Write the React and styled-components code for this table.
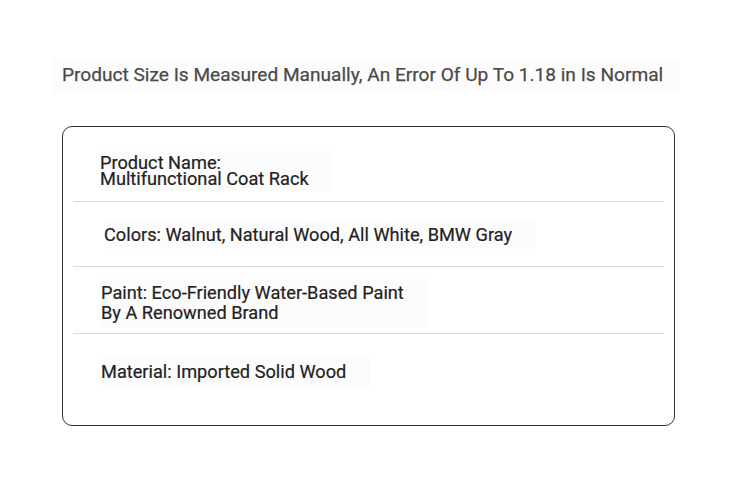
import React from 'react';
import styled, { createGlobalStyle } from 'styled-components';

const Global = createGlobalStyle`
    body {
        margin: 0;
        background: #ffffff;
        font-family: Roboto, "Liberation Sans", sans-serif;
    }
`;

const Page = styled.div`
    width: 750px;
    height: 482px;
    box-sizing: border-box;
    padding-top: 58px;
`;

const Title = styled.div`
    margin: 0 70px 0 52px;
    padding: 5px 10px 6px;
    background-color: #fcfcfc;
    color: #4a4a4a;
    font-size: 19.1px;
    font-weight: 400;
    -webkit-text-stroke: 0.25px #4a4a4a;
    line-height: 24px;
    height: 25px;
`;

const Card = styled.div`
    margin: 32px 75px 0 62px;
    border: 1.3px solid #333333;
    border-radius: 10px;
    padding: 10px 10px 9px;
    height: 300px;
    box-sizing: border-box;
    display: flex;
    flex-direction: column;
`;

const Row = styled.div`
    height: ${p => p.h}px;
    flex: ${p => (p.grow ? 1 : 'none')};
    display: flex;
    align-items: center;
    padding-left: ${p => p.indent || 27}px;
    padding-top: ${p => p.shift || 0}px;
    padding-bottom: ${p => p.lift || 0}px;
    box-sizing: border-box;
    border-bottom: ${p => (p.last ? 'none' : '1.3px solid #dcdcdc')};
`;

const Label = styled.div`
    background-color: #fcfcfc;
    padding: 4px 24px 4px 0;
    color: #222222;
    font-size: 18.2px;
    -webkit-text-stroke: 0.2px #222222;
    line-height: ${p => p.lh || 20}px;
`;

const App = () => {
    return <Page>
        <Global />
        <Title>Product Size Is Measured Manually, An Error Of Up To 1.18 in Is Normal</Title>
        <Card>
            <Row h={65} shift={4}>
                <Label lh={16}>Product Name:<br />Multifunctional Coat Rack</Label>
            </Row>
            <Row h={65} indent={31} shift={2}>
                <Label>Colors: Walnut, Natural Wood, All White, BMW Gray</Label>
            </Row>
            <Row h={67} indent={28} shift={5}>
                <Label>Paint: Eco-Friendly Water-Based Paint<br />By A Renowned Brand</Label>
            </Row>
            <Row grow last indent={28} lift={6}>
                <Label>Material: Imported Solid Wood</Label>
            </Row>
        </Card>
    </Page>
}

export default App;
